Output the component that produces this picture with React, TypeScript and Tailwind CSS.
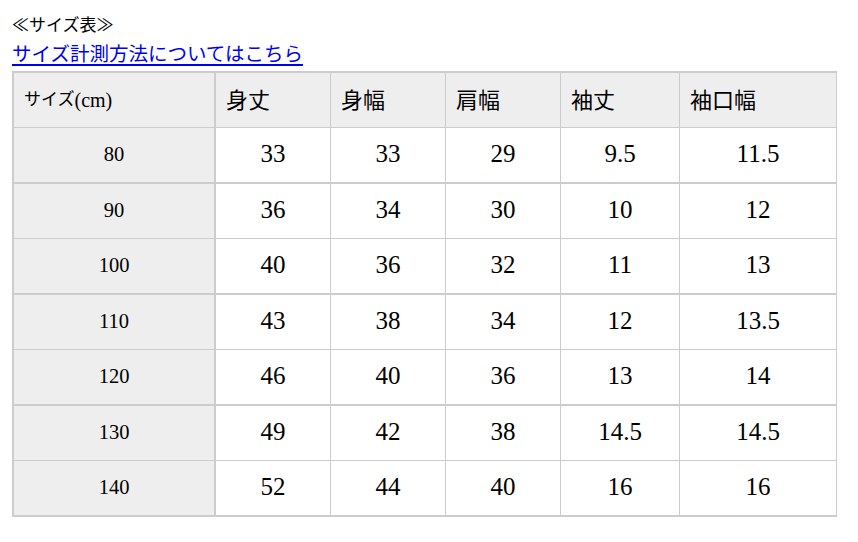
const serif = "font-['Liberation_Serif','Noto_Sans_CJK_JP',serif]";

const headers = ['身丈', '身幅', '肩幅', '袖丈', '袖口幅'];

const rows: string[][] = [
  ['80', '33', '33', '29', '9.5', '11.5'],
  ['90', '36', '34', '30', '10', '12'],
  ['100', '40', '36', '32', '11', '13'],
  ['110', '43', '38', '34', '12', '13.5'],
  ['120', '46', '40', '36', '13', '14'],
  ['130', '49', '42', '38', '14.5', '14.5'],
  ['140', '52', '44', '40', '16', '16'],
];

export default function App() {
  return (
    <div className={`min-h-screen bg-white text-black ${serif}`}>
      <div className="px-[12px] pt-[14px]">
        {/* Title */}
        <div className="h-[24px] text-[17px] leading-[24px]">≪サイズ表≫</div>

        {/* Link */}
        <div className="mt-[5px] text-[19.5px] leading-[24px]">
          <a href="#" className="text-[#0000ee] underline decoration-2 underline-offset-[3px]">
            サイズ計測方法についてはこちら
          </a>
        </div>

        {/* Size table */}
        <div className="mt-[4px] grid w-[825px] grid-cols-[202px_115px_115px_115px_119px_157px] border-l-2 border-t-2 border-[#cccccc]">
          <div className="flex h-[55px] items-center border-b border-r-2 border-[#cccccc] bg-[#eeeeee] pl-[10px] text-[17px]">
            サイズ<span className="text-[20px]">(cm)</span>
          </div>
          {headers.map((h) => (
            <div
              key={h}
              className="flex h-[55px] items-center border-b border-r border-[#cccccc] bg-[#eeeeee] pl-[10px] text-[22px]"
            >
              {h}
            </div>
          ))}

          {rows.map((row, r) =>
            row.map((cell, c) => (
              <div
                key={`${r}-${c}`}
                className={`flex items-center justify-center border-[#cccccc] pb-[2px] ${
                  r % 2 === 0 ? 'h-[56px] border-b-2' : 'h-[55px] border-b'
                } ${
                  c === 0
                    ? 'border-r-2 bg-[#eeeeee] text-[20.5px]'
                    : 'border-r bg-white text-[25px]'
                }`}
              >
                {cell}
              </div>
            ))
          )}
        </div>
      </div>
    </div>
  );
}
